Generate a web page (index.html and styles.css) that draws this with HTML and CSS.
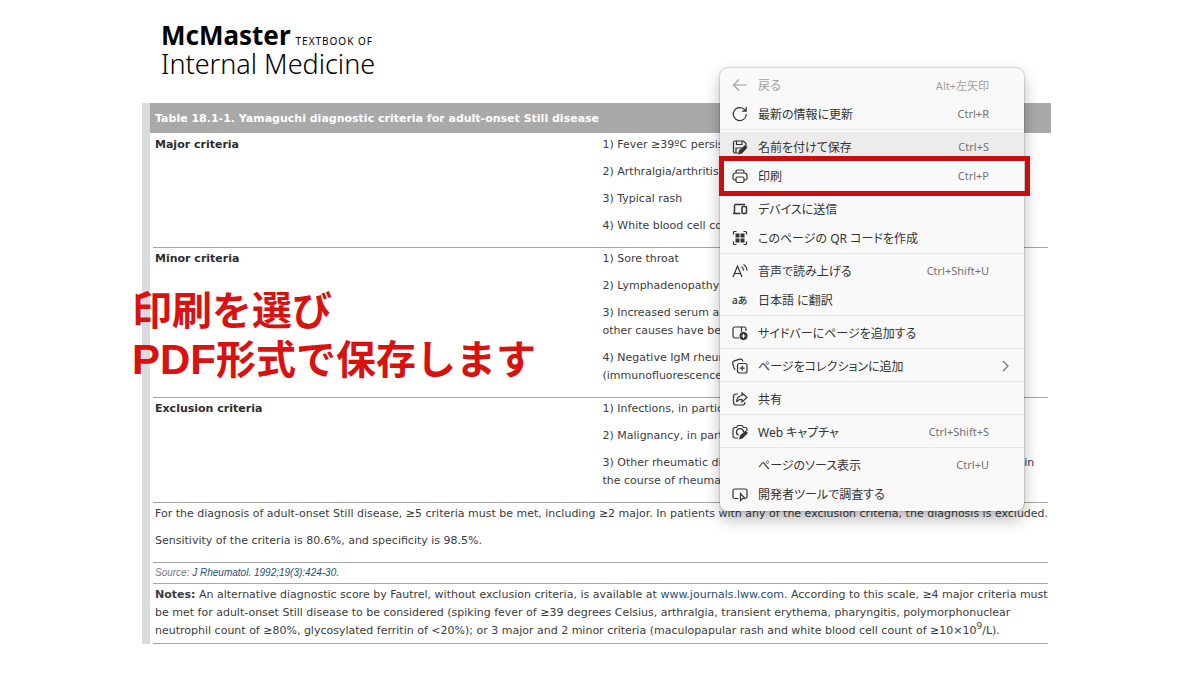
FILE: index.html
```
<!DOCTYPE html>
<html lang="ja">
<head>
    <meta charset="UTF-8">
    <meta name="viewport" content="width=device-width, initial-scale=1.0">
    <title>McMaster Textbook of Internal Medicine</title>
    <link rel="stylesheet" href="styles.css">
</head>
<body>
    <header class="logo" lang="en">
        <div class="logo-top"><strong>McMaster</strong><span class="logo-small">TEXTBOOK OF</span></div>
        <div class="logo-bottom">Internal Medicine</div>
    </header>

    <main class="criteria" lang="en">
        <h1 class="criteria-title">Table 18.1-1. Yamaguchi diagnostic criteria for adult-onset Still disease</h1>
        <table class="criteria-table">
            <tr>
                <th scope="row">Major criteria</th>
                <td>
                    <p>1) Fever ≥39ºC persisting ≥1 week</p>
                    <p>2) Arthralgia/arthritis persisting ≥2 weeks</p>
                    <p>3) Typical rash</p>
                    <p>4) White blood cell count ≥10×10<sup>9</sup>/L</p>
                </td>
            </tr>
            <tr>
                <th scope="row">Minor criteria</th>
                <td>
                    <p>1) Sore throat</p>
                    <p>2) Lymphadenopathy or splenomegaly</p>
                    <p>3) Increased serum aminotransferase levels after<br>other causes have been excluded</p>
                    <p>4) Negative IgM rheumatoid factor and ANA<br>(immunofluorescence)</p>
                </td>
            </tr>
            <tr>
                <th scope="row">Exclusion criteria</th>
                <td>
                    <p>1) Infections, in particular sepsis and EBV</p>
                    <p>2) Malignancy, in particular lymphoma</p>
                    <p>3) Other rheumatic diseases with symptoms that are most commonly found in<br>the course of rheumatic disease</p>
                </td>
            </tr>
            <tr>
                <td colspan="2" class="wide">
                    <p>For the diagnosis of adult-onset Still disease, ≥5 criteria must be met, including ≥2 major. In patients with any of the exclusion criteria, the diagnosis is excluded.</p>
                    <p>Sensitivity of the criteria is 80.6%, and specificity is 98.5%.</p>
                </td>
            </tr>
            <tr>
                <td colspan="2" class="source">Source: <a href="#">J Rheumatol. 1992;19(3):424-30.</a></td>
            </tr>
            <tr>
                <td colspan="2" class="wide"><strong>Notes:</strong> An alternative diagnostic score by Fautrel, without exclusion criteria, is available at <a href="#">www.journals.lww.com</a>. According to this scale, ≥4 major criteria must<br>be met for adult-onset Still disease to be considered (spiking fever of ≥39 degrees Celsius, arthralgia, transient erythema, pharyngitis, polymorphonuclear<br>neutrophil count of ≥80%, glycosylated ferritin of &lt;20%); or 3 major and 2 minor criteria (maculopapular rash and white blood cell count of ≥10×10<sup>9</sup>/L).</td>
            </tr>
        </table>
    </main>

    <p class="callout">印刷を選び<br><span class="latin">PDF</span>形式で保存します</p>

    <!-- 右クリックメニュー -->
    <div class="menu" role="menu">
        <button class="menu-item" disabled>
            <svg viewBox="0 0 16 16"><path d="M15 8H1.500M7 2.500 1.500 8 7 13.500"/></svg>
            <span>戻る</span><kbd>Alt+左矢印</kbd>
        </button>
        <button class="menu-item">
            <svg viewBox="0 0 16 16"><path d="M14.300 8A6.500 6.500 0 1 1 12 3.100L14 5M14.200 1v4.200H10"/></svg>
            <span>最新の情報に更新</span><kbd>Ctrl+R</kbd>
        </button>
        <hr>
        <button class="menu-item active">
            <svg viewBox="0 0 16 16"><path d="M6 14H3a1.500 1.500 0 0 1-1.500-1.500v-9A1.500 1.500 0 0 1 3 2h8.500L14 4.500V7M4.500 2v3.500H10V2M4 14V9h6"/><path class="fill" d="m6 15.500 1-4 6-5.500 2.500 2.500-5.500 6z"/></svg>
            <span>名前を付けて保存</span><kbd>Ctrl+S</kbd>
        </button>
        <button class="menu-item marked">
            <svg viewBox="0 0 16 16"><path d="M4 5V3.500A1.500 1.500 0 0 1 5.500 2h5A1.500 1.500 0 0 1 12 3.500V5M4 12H2.500A1.500 1.500 0 0 1 1 10.500V7.500A2.500 2.500 0 0 1 3.500 5h9A2.500 2.500 0 0 1 15 7.500v3a1.500 1.500 0 0 1-1.500 1.500H12"/><rect x="4" y="9" width="8" height="5.500" rx="1.500"/></svg>
            <span>印刷</span><kbd>Ctrl+P</kbd>
        </button>
        <hr>
        <button class="menu-item">
            <svg viewBox="0 0 16 16"><path d="M8.500 12.500H1M2.500 12V4.500a1 1 0 0 1 1-1H13" stroke-width="1.500"/><rect x="10" y="5.500" width="4.500" height="7" rx="1" stroke-width="1.500"/></svg>
            <span>デバイスに送信</span>
        </button>
        <button class="menu-item">
            <svg viewBox="0 0 16 16"><path d="M1.500 4.500v-2a1 1 0 0 1 1-1h2M11.500 1.500h2a1 1 0 0 1 1 1v2M14.500 11.500v2a1 1 0 0 1-1 1h-2M4.500 14.500h-2a1 1 0 0 1-1-1v-2"/><path class="fill" d="M3.500 3.500h4v4h-4zM8.500 3.500h4v4h-4zM3.500 8.500h4v4h-4zM8.500 8.500h4v4h-4z"/></svg>
            <span>このページの QR コードを作成</span>
        </button>
        <hr>
        <button class="menu-item">
            <svg viewBox="0 0 16 16"><path d="M1 14 5.500 3 10 14M2.500 10.500h6M9.500 3.500q2 1.500 2 4M11.500 1.500q3.500 2 3.500 6"/></svg>
            <span>音声で読み上げる</span><kbd>Ctrl+Shift+U</kbd>
        </button>
        <button class="menu-item">
            <b class="glyph">aあ</b>
            <span>日本語 に翻訳</span>
        </button>
        <hr>
        <button class="menu-item">
            <svg viewBox="0 0 16 16"><path d="M7 13H3a2 2 0 0 1-2-2V4a2 2 0 0 1 2-2h9a2 2 0 0 1 2 2v2M9.500 2v5"/><circle class="fill" cx="11.500" cy="11" r="4"/><path class="light" d="M11.500 9v4M9.500 11h4"/></svg>
            <span>サイドバーにページを追加する</span>
        </button>
        <hr>
        <button class="menu-item">
            <svg viewBox="0 0 16 16"><rect x="5.500" y="5.500" width="9.500" height="9.500" rx="2"/><path d="M10.200 7.700v5M7.700 10.200h5M3.500 11.500A2.500 2.500 0 0 1 2 10L.8 5.500A2.200 2.200 0 0 1 2.300 2.800L8 1.200a2.200 2.200 0 0 1 2.700 1.500L11 3.500"/></svg>
            <span>ページをコレクションに追加</span>
            <svg class="chevron" viewBox="0 0 16 16"><path d="m6 3 5 5-5 5"/></svg>
        </button>
        <hr>
        <button class="menu-item">
            <svg viewBox="0 0 16 16"><path d="M6 3H4a2.500 2.500 0 0 0-2.500 2.500v6A2.500 2.500 0 0 0 4 14h6.500a2.500 2.500 0 0 0 2.500-2.500V11M10 2l5 4.500-5 4.500V8.500Q6.500 8 4.500 11 5 5 10 4.500z"/></svg>
            <span>共有</span>
        </button>
        <hr>
        <button class="menu-item">
            <svg viewBox="0 0 16 16"><path d="M6 14H3a2 2 0 0 1-2-2V5.500a2 2 0 0 1 2-2h1.500L6 1.500h4l1.500 2H13a2 2 0 0 1 2 2V7M6.500 11.300A3.500 3.500 0 1 1 11.500 8"/><path class="fill" d="m7 15.500 1-4L13.500 6.500 16 9l-5.500 5.500z"/></svg>
            <span>Web キャプチャ</span><kbd>Ctrl+Shift+S</kbd>
        </button>
        <hr>
        <button class="menu-item">
            <i class="glyph"></i>
            <span>ページのソース表示</span><kbd>Ctrl+U</kbd>
        </button>
        <button class="menu-item">
            <svg viewBox="0 0 16 16"><path d="M6.500 12.500H3a2 2 0 0 1-2-2V5a2 2 0 0 1 2-2h10a2 2 0 0 1 2 2v5.500a2 2 0 0 1-1 1.700"/><path d="M8.500 7.500v7l2-2H13z"/></svg>
            <span>開発者ツールで調査する</span>
        </button>
    </div>
</body>
</html>
```
FILE: styles.css
```
body {
    position: relative;
    margin: 0;
    padding: 20px 149px 24px 142px;
    background: #fff;
    color: #3c3c3c;
    font-family: "DejaVu Sans", Verdana, sans-serif;
    font-size: 11px;
    line-height: 18px;
}
.logo {
    height: 83px;
    padding-left: 19px;
    color: #000;
    font-family: "Noto Sans", sans-serif;
    white-space: nowrap;
}
.logo-top {
    display: flex;
    align-items: baseline;
    gap: 5px;
    font-size: 26px;
    line-height: 30px;
}
.logo-small {
    font-size: 10px;
    letter-spacing: 1px;
    line-height: 10px;
}
.logo-bottom {
    font-size: 27px;
    font-weight: 300;
    line-height: 28px;
}

/* 診断基準の表 */
.criteria {
    border-left: 8px solid #dbdbdd;
}
.criteria-title {
    margin: 0;
    padding: 7px 5px 5px;
    background: #a9a9a9;
    color: #fff;
    font-size: 11px;
    line-height: 18px;
}
.criteria-table {
    width: calc(100% - 6px);
    margin: 1px 3px 0;
    border-collapse: separate;
    border-spacing: 0;
    table-layout: fixed;
}
.criteria-table th,
.criteria-table td {
    padding: 2px 2px 3px;
    border-bottom: 1px solid #a5a5a5;
    text-align: left;
    vertical-align: top;
}
.criteria-table th {
    color: #2d2d2d;
}
.criteria-table .wide {
    white-space: nowrap;
}
.criteria-table p {
    margin: 0 0 9px;
}
.criteria-table a {
    color: #1f4e79;
    text-decoration: none;
}
.criteria-table sup {
    font-size: 9px;
    line-height: 0;
}
.criteria-table .source {
    padding: 1px 2px;
    color: #777;
    font-family: "Liberation Sans", Arial, sans-serif;
    font-size: 10px;
    font-style: italic;
}

/* 赤字の説明 */
.callout {
    position: absolute;
    top: 284px;
    left: 132px;
    margin: 0;
    color: #d9110f;
    font-family: "Noto Sans CJK JP", sans-serif;
    font-size: 40px;
    font-weight: 700;
    line-height: 49px;
}
.latin {
    font-family: "Liberation Sans", Arial, sans-serif;
    font-size: 42px;
    line-height: 40px;
}

.menu {
    position: absolute;
    top: 68px;
    left: 720px;
    display: flex;
    flex-direction: column;
    box-sizing: border-box;
    width: 304px;
    padding: 2px 0 3px;
    border-radius: 8px;
    background: #f9f9f9;
    box-shadow: 0 0 2px rgba(0, 0, 0, 0.4), 0 8px 16px rgba(0, 0, 0, 0.28);
}
.menu hr {
    width: 100%;
    margin: 1px 0 2px;
    border: 0;
    border-top: 1px solid #e6e6e6;
}
.menu-item {
    position: relative;
    display: flex;
    align-items: center;
    height: 29px;
    padding: 0 35px 0 12px;
    border: 0;
    background: none;
    color: #333;
    font-family: "Noto Sans", "Noto Sans CJK JP", sans-serif;
    font-size: 12px;
    font-feature-settings: "palt";
    text-align: left;
}
.menu-item:disabled {
    color: #a0a0a0;
}
.menu-item.active {
    background: #ececec;
}
.menu-item.marked::after {
    content: "";
    position: absolute;
    inset: -5px -6px -6px -1px;
    border: 5px solid #c80f10;
}
.menu-item svg,
.glyph {
    flex: none;
    width: 16px;
    height: 16px;
    margin-right: 10px;
    fill: none;
    stroke: currentColor;
    stroke-width: 1.2;
}
.menu-item .fill {
    fill: currentColor;
    stroke: none;
}
.menu-item .light {
    stroke: #fff;
}
.glyph {
    font-size: 10px;
    font-weight: 500;
    line-height: 16px;
    white-space: nowrap;
}
.menu-item kbd {
    margin-left: auto;
    color: #727272;
    font-family: inherit;
    font-size: 11px;
}
.menu-item:disabled kbd {
    color: #a0a0a0;
}
.menu-item .chevron {
    position: absolute;
    right: 11px;
    margin: 0;
    color: #727272;
}
```
